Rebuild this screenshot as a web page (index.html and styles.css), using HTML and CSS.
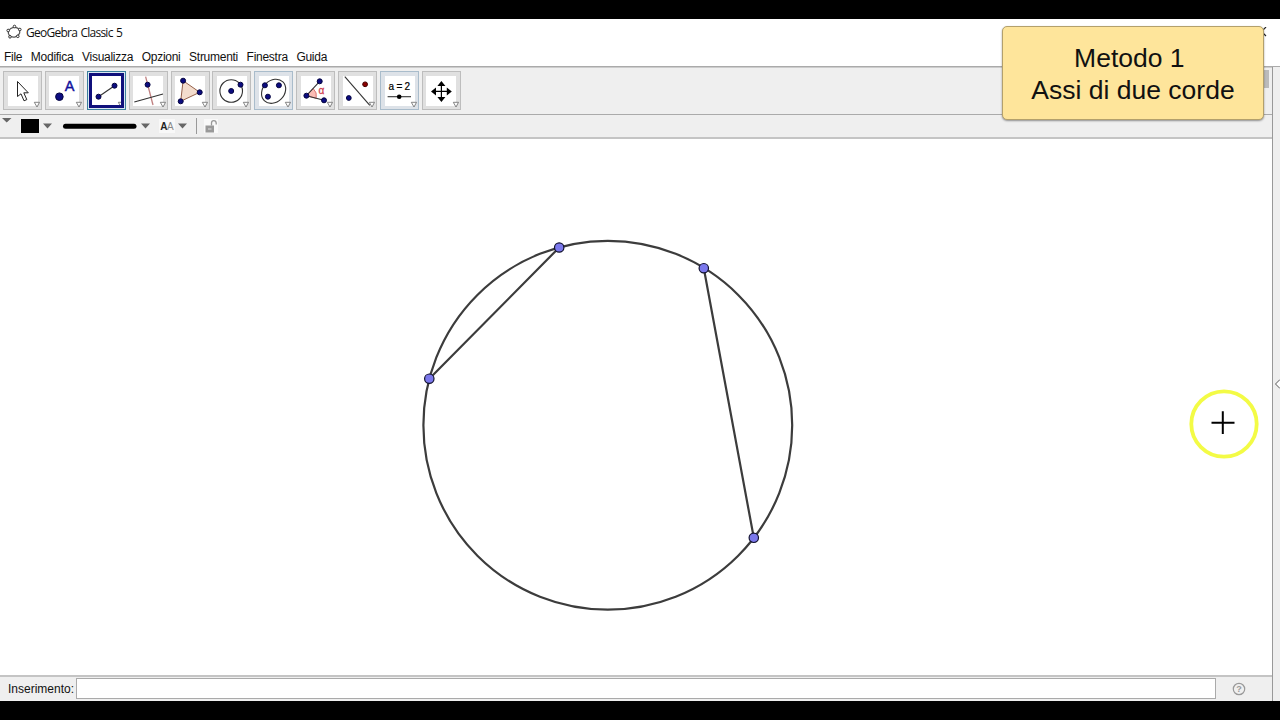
FILE: index.html
```html
<!DOCTYPE html>
<html lang="it">
<head>
  <meta charset="UTF-8">
  <title>GeoGebra Classic 5</title>
  <link rel="stylesheet" href="styles.css">
</head>
<body>
  <div class="window">
    <div class="titlebar">
      <svg class="logo" width="16" height="16" viewBox="0 0 16 16">
        <ellipse cx="8" cy="8.2" rx="5.8" ry="4.8" transform="rotate(-15 8 8)" fill="none" stroke="#555" stroke-width="1.2"/>
        <g fill="#fff" stroke="#333"><circle cx="8.5" cy="2.5" r="1.3"/><circle cx="13.8" cy="5.5" r="1.3"/><circle cx="11.8" cy="12.3" r="1.3"/><circle cx="4" cy="12.8" r="1.3"/><circle cx="2.2" cy="6.5" r="1.3"/></g>
      </svg>
      <span class="title">GeoGebra Classic 5</span>
      <svg class="close" width="10" height="10" viewBox="0 0 10 10"><path d="M0 0L9 9M9 0L0 9" stroke="#222" stroke-width="1.2"/></svg>
    </div>
    <div class="menu">
      <span>File</span><span>Modifica</span><span>Visualizza</span><span>Opzioni</span><span>Strumenti</span><span>Finestra</span><span>Guida</span>
    </div>

    <div class="workspace">
      <div class="main">
        <div class="toolbar">
          <div class="tool">
            <svg viewBox="0 0 39 39"><path d="M14.5 10.5V25.5L18 22.8L21 29.8L23.8 28.6L20.8 21.8H25.3Z" fill="#fff" stroke="#222"/><path class="more" d="M31.3 31.3h5.2L34 36z"/></svg>
          </div>
          <div class="tool">
            <svg viewBox="0 0 39 39"><circle cx="14.4" cy="25.7" r="3.8" class="dot"/><text x="19.8" y="20.3" class="letter">A</text><path class="more" d="M31.3 31.3h5.2L34 36z"/></svg>
          </div>
          <div class="tool tint selected">
            <svg viewBox="0 0 39 39"><path d="M11.5 25.7L27.5 14.7" class="ln"/><circle cx="11.5" cy="25.7" r="2.5" class="dot"/><circle cx="27.5" cy="14.7" r="2.5" class="dot"/><path class="more" d="M31.3 31.3h5.2L34 36z"/></svg>
          </div>
          <div class="tool">
            <svg viewBox="0 0 39 39"><path d="M16.6 5.7L24 34" stroke="#c08080" stroke-width="1.3"/><path d="M5.3 31L34 23" class="ln"/><circle cx="18.6" cy="13.7" r="2.5" class="dot"/><path class="more" d="M31.3 31.3h5.2L34 36z"/></svg>
          </div>
          <div class="tool">
            <svg viewBox="0 0 39 39"><path d="M12.1 9.7L28.7 21.3L9.7 30.3Z" fill="#f3dccd" stroke="#94604a"/><circle cx="12.1" cy="9.7" r="2.5" class="dot"/><circle cx="28.7" cy="21.3" r="2.5" class="dot"/><circle cx="9.7" cy="30.3" r="2.5" class="dot"/><path class="more" d="M31.3 31.3h5.2L34 36z"/></svg>
          </div>
          <div class="tool">
            <svg viewBox="0 0 39 39"><circle cx="19.2" cy="20" r="11.3" class="ln"/><circle cx="19.2" cy="20" r="2.5" class="dot"/><circle cx="28.5" cy="13.7" r="2.5" class="dot"/><path class="more" d="M31.3 31.3h5.2L34 36z"/></svg>
          </div>
          <div class="tool tint">
            <svg viewBox="0 0 39 39"><ellipse cx="19.6" cy="20.3" rx="13.2" ry="10.8" transform="rotate(-45 19.6 20.3)" class="ln"/><circle cx="10.9" cy="14.3" r="2.5" class="dot"/><circle cx="24.9" cy="14.3" r="2.5" class="dot"/><circle cx="13.9" cy="25.7" r="2.5" class="dot"/><path class="more" d="M31.3 31.3h5.2L34 36z"/></svg>
          </div>
          <div class="tool">
            <svg viewBox="0 0 39 39"><path d="M10.4 24.7L17.2 17.5Q21.5 21.5 20.2 27.3Z" fill="#fbbcb4" stroke="#d06060" stroke-width=".8"/><path d="M23.7 10.3L10.4 24.7L28 29.3" class="ln"/><circle cx="23.7" cy="10.3" r="2.5" class="dot"/><circle cx="10.4" cy="24.7" r="2.5" class="dot"/><circle cx="28" cy="29.3" r="2.5" class="dot"/><text x="22.6" y="23" class="alpha">α</text><path class="more" d="M31.3 31.3h5.2L34 36z"/></svg>
          </div>
          <div class="tool">
            <svg viewBox="0 0 39 39"><path d="M6.8 5.7L31.8 34.3" class="ln"/><circle cx="27.1" cy="13.3" r="2.4" fill="#8a0000" stroke="#400"/><circle cx="10.8" cy="27" r="2.4" class="dot"/><path class="more" d="M31.3 31.3h5.2L34 36z"/></svg>
          </div>
          <div class="tool tint">
            <svg viewBox="0 0 39 39"><text x="8.6" y="19" class="slider" textLength="21.5">a=2</text><path d="M7.6 25.7H31" class="ln"/><circle cx="19.2" cy="25.7" r="2.3"/><path class="more" d="M31.3 31.3h5.2L34 36z"/></svg>
          </div>
          <div class="tool">
            <svg viewBox="0 0 39 39"><path d="M19.4 12V29M11 20.4H28" stroke="#000" stroke-width="1.2"/><path d="M19.4 10l4 5h-8zM19.4 31l4-5h-8zM9 20.4l5-4v8zM29.8 20.4l-5-4v8z"/><path class="more" d="M31.3 31.3h5.2L34 36z"/></svg>
          </div>
          <div class="undo"></div>
        </div>

        <div class="stylebar">
          <svg width="230" height="22" viewBox="0 0 230 22">
            <path d="M2 3h9.5L6.7 7.5zM43 8.5h9L47.5 13.5zM141 8.5h9L145.5 13.5zM178 8.5h9L182.5 13.5z" fill="#666"/>
            <rect x="21" y="4" width="18" height="14"/>
            <path d="M65.5 11.3H134" stroke="#000" stroke-width="5" stroke-linecap="round"/>
            <rect x="159" y="4" width="16" height="14" fill="#f8f8f8"/>
            <text x="160.3" y="15" class="aa-bold">A</text><text x="167" y="15" class="aa">A</text>
            <path d="M196.5 3V19" stroke="#999"/>
            <rect x="204" y="4" width="14" height="14" fill="#f9f9f9"/>
            <rect x="205.5" y="10.5" width="8.5" height="7" fill="#999"/>
            <path d="M211.5 10.5V8Q211.5 5.7 213.8 5.7T216.2 8V9.5" fill="none" stroke="#999" stroke-width="1.3"/>
            <path d="M208 14H211.5" stroke="#ddd"/>
          </svg>
        </div>

        <svg class="canvas" viewBox="0 139 1272 536">
          <g class="shape">
            <circle cx="607.8" cy="425.3" r="184.4"/>
            <path d="M559.2 247.5L429.3 378.7M703.8 268.2L753.8 537.8"/>
          </g>
          <g class="point">
            <circle cx="559.2" cy="247.5" r="4.7"/>
            <circle cx="429.3" cy="378.7" r="4.7"/>
            <circle cx="703.8" cy="268.2" r="4.7"/>
            <circle cx="753.8" cy="537.8" r="4.7"/>
          </g>
          <circle cx="1224" cy="424" r="32.7" fill="none" stroke="#f3fb45" stroke-width="3.8"/>
          <path d="M1211.5 422.7H1234.5M1222.8 411.3V434" stroke="#000" stroke-width="2"/>
        </svg>

        <div class="inputbar">
          <label for="cmd">Inserimento:</label>
          <input id="cmd" type="text">
          <svg width="14" height="14" viewBox="0 0 14 14"><circle cx="7" cy="7" r="5.7" fill="none" stroke="#999" stroke-width="1.2"/><text x="4.2" y="10.3" class="help">?</text></svg>
        </div>
      </div>
      <div class="side">
        <svg width="7" height="12" viewBox="0 0 7 12"><path d="M7 1.5L2.5 6L7 10.5" fill="#fff" stroke="#555"/></svg>
      </div>
    </div>
  </div>

  <div class="note">Metodo 1&nbsp;<br>Assi di due corde</div>
</body>
</html>
```

FILE: styles.css
```css
* {
  box-sizing: border-box;
}
body {
  margin: 0;
  padding: 19px 0;
  height: 720px;
  background: #000;
  overflow: hidden;
  font-family: "Liberation Sans", Arial, sans-serif;
  font-size: 12px;
  color: #111;
}
svg {
  display: block;
}
.window {
  height: 682px;
  display: flex;
  flex-direction: column;
  background: #fff;
}

.titlebar {
  height: 26px;
  padding: 0 13px 0 6px;
  display: flex;
  align-items: center;
}
.title {
  margin-left: 4px;
  font-family: "Open Sans", "Noto Sans", sans-serif;
  font-size: 12px;
  letter-spacing: -0.75px;
  word-spacing: 1px;
}
.close {
  margin-left: auto;
}
.menu {
  height: 21px;
  padding: 2px 0 0 4px;
  display: flex;
  align-items: center;
  gap: 8.6px;
  letter-spacing: -0.27px;
}

.workspace {
  flex: 1;
  display: flex;
  border-top: 1px solid #aaa;
}
.main {
  width: 1272px;
  display: flex;
  flex-direction: column;
}
.side {
  width: 8px;
  display: flex;
  align-items: center;
  background: #efefef;
  border-left: 1px solid #999;
}

.toolbar {
  height: 48px;
  padding: 3px 3px 0;
  display: flex;
  gap: 2.9px;
  background: #efefef;
  border-top: 1px solid #ccc;
  border-bottom: 1px solid #aaa;
}
.tool {
  width: 39px;
  height: 39px;
  flex: none;
  border: 1px solid #bdbdbd;
  background: #e0e0e0;
  padding: 4.5px;
}
.tool svg {
  width: 39px;
  height: 39px;
  margin: -5.5px;
  background: linear-gradient(#fff, #fff) center / 30px 30px no-repeat;
}
.tint {
  border-color: #a9bccb;
  background: #dde2e8;
}
.selected {
  border-color: #3c7f9c;
  background: #d9e8f2;
}
.selected svg {
  outline: 3px solid #10107c;
  outline-offset: -5px;
}
.undo {
  width: 6px;
  height: 18px;
  margin: -1px 0 0 auto;
  background: #bbb;
}
.dot {
  fill: #0c0c80;
  stroke: #050540;
}
.ln {
  fill: none;
  stroke: #333;
  stroke-width: 1.1;
}
.more {
  fill: #fff;
  stroke: #777;
  stroke-width: 0.9;
}
.letter {
  font-size: 14.5px;
  fill: #10109c;
  stroke: #10109c;
  stroke-width: 0.4;
}
.alpha {
  font-size: 10px;
  fill: #d04050;
  stroke: #d04050;
  stroke-width: 0.3;
}
.slider {
  font-size: 10px;
  stroke: #000;
  stroke-width: 0.2;
}

.stylebar {
  height: 24px;
  background: #efefef;
  border-bottom: 2px solid #c4c4c4;
}
.aa,
.aa-bold {
  font-size: 10px;
  fill: #888;
}
.aa-bold {
  font-weight: bold;
  fill: #222;
}

.canvas {
  width: 1272px;
  height: 536px;
}
.shape {
  fill: none;
  stroke: #3c3c3c;
  stroke-width: 2.2;
}
.point {
  fill: #7b78ec;
  stroke: #111130;
  stroke-width: 1.2;
}

.inputbar {
  flex: 1;
  display: flex;
  align-items: center;
  padding: 0 0 1px 8px;
  background: #efefef;
  border-top: 2px solid #c4c4c4;
}
.inputbar label {
  width: 68px;
}
.inputbar input {
  width: 1140px;
  height: 21px;
  border: 1px solid #aaa;
  background: #fff;
  padding: 0 3px;
}
.inputbar svg {
  margin-left: 16px;
}
.help {
  font-size: 9px;
  font-weight: bold;
  fill: #999;
}

/* caption laid over the window */
.note {
  position: absolute;
  left: 1002px;
  top: 26px;
  width: 262px;
  height: 94px;
  padding: 16px 0 0;
  background: #fee59b;
  border: 1px solid #b3a06c;
  border-radius: 5px;
  box-shadow: 0 1px 2px rgba(0, 0, 0, 0.4);
  text-align: center;
  font-size: 26.5px;
  line-height: 31.5px;
}
```
